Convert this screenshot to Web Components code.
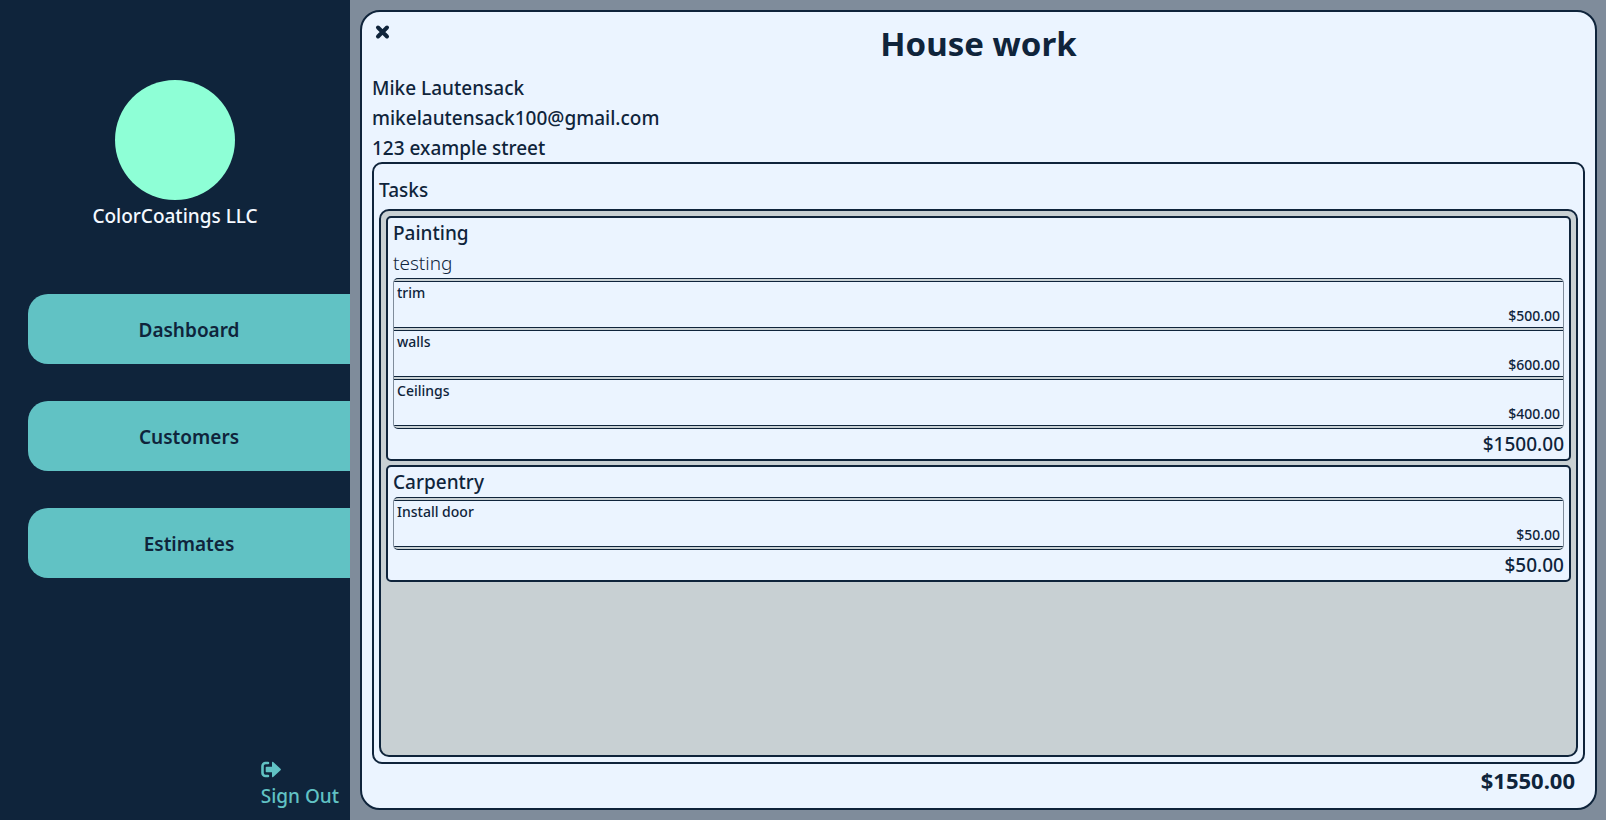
<!DOCTYPE html>
<html lang="en">
<head>
<meta charset="utf-8">
<title>House work - ColorCoatings LLC</title>
<style>
  :root {
    --navy: #0f243b;
    --teal: #61c2c4;
    --mint: #8effd6;
    --paper: #ebf4ff;
    --stone: #c8d0d3;
    --slate: #7f8c9b;
  }
  html, body { height: 100%; margin: 0; }
  body {
    font: 500 19px/30px "Noto Sans", "Open Sans", sans-serif;
    color: var(--navy);
  }
</style>
</head>
<body>
<app-shell>
  <side-bar slot="side" company="ColorCoatings LLC">
    <nav-link href="#dashboard">Dashboard</nav-link>
    <nav-link href="#customers">Customers</nav-link>
    <nav-link href="#estimates">Estimates</nav-link>
  </side-bar>
  <estimate-card>
    <span slot="title">House work</span>
    <span slot="client">Mike Lautensack</span>
    <span slot="client">mikelautensack100@gmail.com</span>
    <span slot="client">123 example street</span>
    <task-card name="Painting" note="testing" total="$1500.00">
      <task-item price="$500.00">trim</task-item>
      <task-item price="$600.00">walls</task-item>
      <task-item price="$400.00">Ceilings</task-item>
    </task-card>
    <task-card name="Carpentry" total="$50.00">
      <task-item price="$50.00">Install door</task-item>
    </task-card>
    <span slot="total">$1550.00</span>
  </estimate-card>
</app-shell>

<script>
  const define = (name, html, setup) => {
    const template = document.createElement('template');
    template.innerHTML = `<style>*, :host { box-sizing: border-box; }</style>` + html;
    customElements.define(name, class extends HTMLElement {
      constructor() {
        super();
        this.attachShadow({ mode: 'open' }).append(template.content.cloneNode(true));
      }
      connectedCallback() { if (setup) setup(this, s => this.shadowRoot.querySelector(s)); }
    });
  };

  define('app-shell', `
    <style>
      :host { display: flex; min-height: 100vh; background: var(--slate); }
      main { flex: 1; min-width: 0; display: flex; padding: 10px 9px 10px 10px; }
      main ::slotted(*) { flex: 1; min-width: 0; }
    </style>
    <slot name="side"></slot>
    <main><slot></slot></main>`);

  define('side-bar', `
    <style>
      :host { flex: 0 0 350px; display: flex; flex-direction: column; background: var(--navy); }
      header { display: flex; flex-direction: column; align-items: center; padding-top: 80px; color: #f4f9ff; }
      .avatar { width: 120px; height: 120px; border-radius: 50%; background: var(--mint); }
      .company { line-height: 32px; }
      nav { display: flex; flex-direction: column; gap: 37px; margin: 62px 0 0 28px; }
      button {
        margin: auto 11px 9px auto; padding: 0; border: 0; background: none;
        font: inherit; color: var(--teal); text-align: left; cursor: pointer;
      }
      svg { display: block; width: 20px; height: 22px; }
    </style>
    <header>
      <div class="avatar"></div>
      <div class="company"></div>
    </header>
    <nav><slot></slot></nav>
    <button type="button">
      <svg viewBox="0 0 20 22" aria-hidden="true">
        <path d="M7 4H4.500A3 3 0 0 0 1.500 7V14A3 3 0 0 0 4.500 17H7" fill="none" stroke="currentColor" stroke-width="2.600" stroke-linecap="round"/>
        <path d="M5.500 7.700H11V3.700q0-1.300 1.200-.600L19.500 9.700q.8.800 0 1.600L12.200 17.900q-1.200.7-1.200-.6V13.300H5.500q-.8 0-.8-.8V8.500q0-.8.800-.8Z" fill="currentColor"/>
      </svg>
      Sign Out
    </button>`,
    (el, $) => { $('.company').textContent = el.getAttribute('company'); });

  define('nav-link', `
    <style>
      :host { display: block; }
      a {
        display: flex; align-items: center; justify-content: center; height: 70px;
        padding-top: 2px;
        border-radius: 20px 0 0 20px; background: var(--teal);
        color: var(--navy); font-weight: 600; text-decoration: none;
      }
    </style>
    <a><slot></slot></a>`,
    (el, $) => { $('a').href = el.getAttribute('href'); });

  define('estimate-card', `
    <style>
      :host {
        display: flex; flex-direction: column; padding: 6px 10px 11px;
        border: 2px solid var(--navy); border-radius: 20px; background: var(--paper);
      }
      header { display: grid; grid-template-columns: 20px 1fr 20px; height: 55px; }
      button {
        align-self: start; padding: 0; border: 0; background: none;
        color: inherit; cursor: pointer;
      }
      svg { display: block; width: 20px; height: 30px; }
      h1 { margin: 0; font-size: 33px; line-height: 52px; font-weight: 700; text-align: center; }
      .client { display: flex; flex-direction: column; height: 89px; }
      .tasks {
        flex: 1; display: flex; flex-direction: column; padding: 11px 5px 5px;
        border: 2px solid var(--navy); border-radius: 10px;
      }
      h2 { margin: 0; font: inherit; }
      .list {
        flex: 1; display: flex; flex-direction: column; gap: 4px; margin-top: 4px; padding: 5px;
        border: 2px solid var(--navy); border-radius: 10px; background: var(--stone);
      }
      .total { padding-right: 10px; font-size: 22px; line-height: 33px; font-weight: 700; text-align: right; }
    </style>
    <header>
      <button type="button" aria-label="Close">
        <svg viewBox="0 0 20 30" aria-hidden="true">
          <path d="M6 9.500 15 18.500M15 9.500 6 18.500" stroke="currentColor" stroke-width="4" stroke-linecap="round"/>
        </svg>
      </button>
      <h1><slot name="title"></slot></h1>
    </header>
    <div class="client"><slot name="client"></slot></div>
    <section class="tasks">
      <h2>Tasks</h2>
      <div class="list"><slot></slot></div>
    </section>
    <div class="total"><slot name="total"></slot></div>`);

  define('task-card', `
    <style>
      :host {
        display: block; padding: 0 5px;
        border: 2px solid var(--navy); border-radius: 5px; background: var(--paper);
      }
      h3, p { margin: 0; font: inherit; }
      .note { font-weight: 300; }
      .note:empty { display: none; }
      .items {
        display: grid; gap: 2px; padding: 2px 0; overflow: hidden;
        border: 1px solid var(--navy); border-left-color: var(--slate); border-right-color: var(--slate);
        border-radius: 5px; background: var(--stone);
      }
      .sum { text-align: right; }
    </style>
    <h3></h3>
    <p class="note"></p>
    <div class="items"><slot></slot></div>
    <p class="sum"></p>`,
    (el, $) => {
      $('h3').textContent = el.getAttribute('name');
      $('.note').textContent = el.getAttribute('note') || '';
      $('.sum').textContent = el.getAttribute('total');
    });

  define('task-item', `
    <style>
      :host {
        display: flex; flex-direction: column; justify-content: space-between;
        min-height: 47px; padding: 0 3px; font-size: 14px; line-height: 22px;
        border: solid var(--navy); border-width: 1px 0; background: var(--paper);
      }
      .price { text-align: right; }
    </style>
    <div><slot></slot></div>
    <div class="price"></div>`,
    (el, $) => { $('.price').textContent = el.getAttribute('price'); });
</script>
</body>
</html>
